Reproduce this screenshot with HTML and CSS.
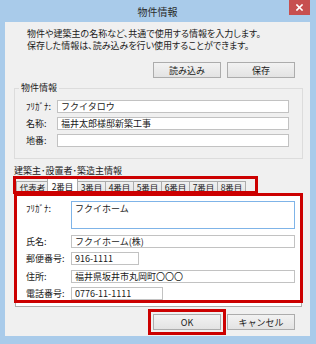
FILE: index.html
```html
<!DOCTYPE html>
<html lang="ja">
<head>
    <meta charset="UTF-8">
    <meta name="viewport" content="width=device-width, initial-scale=1.0">
    <title>物件情報</title>
    <link rel="stylesheet" href="styles.css">
</head>
<body>
    <div class="window">
        <div class="titlebar">
            <span></span>
            <span class="title">物件情報</span>
            <button class="close-btn" aria-label="閉じる">
                <svg width="7" height="7" viewBox="0 0 7 7">
                    <path d="M1 1 L6 6 M6 1 L1 6" stroke="#fff" stroke-width="1.6" stroke-linecap="square"/>
                </svg>
            </button>
        </div>

        <div class="client">
            <p class="intro">物件や建築主の名称など、共通で使用する情報を入力します。<br>保存した情報は、読み込みを行い使用することができます。</p>

            <div class="actions file-actions">
                <button class="btn">読み込み</button>
                <button class="btn">保存</button>
            </div>

            <fieldset class="group">
                <legend>物件情報</legend>
                <div class="form-row">
                    <label>ﾌﾘｶﾞﾅ:</label>
                    <input class="field" type="text" value="フクイタロウ">
                </div>
                <div class="form-row">
                    <label>名称:</label>
                    <input class="field" type="text" value="福井太郎様邸新築工事">
                </div>
                <div class="form-row">
                    <label>地番:</label>
                    <input class="field" type="text" value="">
                </div>
            </fieldset>

            <div class="section-label">建築主･設置者･築造主情報</div>

            <div class="tab-control">
                <div class="tabstrip marked mark-tabs">
                    <div class="tab">代表者</div>
                    <div class="tab active">2番目</div>
                    <div class="tab">3番目</div>
                    <div class="tab">4番目</div>
                    <div class="tab">5番目</div>
                    <div class="tab">6番目</div>
                    <div class="tab">7番目</div>
                    <div class="tab">8番目</div>
                </div>
                <div class="tabpanel marked mark-panel">
                    <div class="form-row tall">
                        <label>ﾌﾘｶﾞﾅ:</label>
                        <textarea class="field focused">フクイホーム</textarea>
                    </div>
                    <div class="form-row">
                        <label>氏名:</label>
                        <input class="field" type="text" value="フクイホーム(株)">
                    </div>
                    <div class="form-row">
                        <label>郵便番号:</label>
                        <input class="field zip" type="text" value="916-1111">
                    </div>
                    <div class="form-row">
                        <label>住所:</label>
                        <input class="field" type="text" value="福井県坂井市丸岡町〇〇〇">
                    </div>
                    <div class="form-row">
                        <label>電話番号:</label>
                        <input class="field tel" type="text" value="0776-11-1111">
                    </div>
                </div>
            </div>

            <div class="actions dialog-actions">
                <span class="marked mark-ok"><button class="btn">OK</button></span>
                <button class="btn">キャンセル</button>
            </div>
        </div>
    </div>
</body>
</html>
```

FILE: styles.css
```css
* {
    margin: 0;
    padding: 0;
    box-sizing: border-box;
}

body {
    font-family: "Noto Sans CJK JP", "Noto Sans", sans-serif;
    font-feature-settings: "palt";
    background: #ffffff;
    color: #1a1a1a;
}

.window {
    width: 316px;
    height: 344px;
    background: #a9cbea;
    padding: 0 6px 8px 5px;
    display: flex;
    flex-direction: column;
}

/* タイトルバー */
.titlebar {
    height: 22px;
    display: grid;
    grid-template-columns: 1fr auto 1fr;
    align-items: start;
}

.titlebar .title {
    font-size: 10px;
    line-height: 24px;
    color: #2b2b2b;
}

.close-btn {
    justify-self: end;
    width: 21px;
    height: 15px;
    border: none;
    background: #c74f4f;
    display: flex;
    align-items: center;
    justify-content: center;
}

.client {
    flex: 1;
    background: #f0f0f0;
    font-size: 9px;
    display: flex;
    flex-direction: column;
}

.intro {
    padding: 6px 0 0 22px;
    line-height: 12px;
}

/* ボタン */
.actions {
    display: flex;
    justify-content: flex-end;
    gap: 6px;
    padding-right: 15px;
}

.file-actions {
    margin-top: 10px;
}

.btn {
    width: 68px;
    height: 16px;
    font-family: inherit;
    font-size: 9px;
    color: #1a1a1a;
    background: linear-gradient(#f2f2f2, #e3e3e3);
    border: 1px solid #acacac;
}

/* グループボックス */
.group {
    margin: 4px 7px 0 9px;
    padding: 6px 13px 11px 11px;
    border: 1px solid #dcdcdc;
    display: flex;
    flex-direction: column;
    gap: 4px;
}

.group legend {
    margin-left: -7px;
    padding: 0 2px;
    line-height: 12px;
}

.form-row {
    display: flex;
    align-items: center;
}

.form-row label {
    width: 31px;
    flex-shrink: 0;
}

.field {
    flex: 1;
    height: 13px;
    font-family: inherit;
    font-size: 9px;
    color: #1a1a1a;
    background: #ffffff;
    border: 1px solid #c2c2c2;
    padding: 0 3px;
    outline: none;
}

.section-label {
    margin: 6px 0 0 9px;
    line-height: 12px;
}

/* タブ */
.tab-control {
    margin: 1px 8px 0 10px;
}

.tabstrip {
    display: flex;
    align-items: flex-end;
    height: 15px;
    padding-left: 1px;
}

.tab {
    width: 29px;
    height: 12px;
    border: 1px solid #acacac;
    border-bottom: none;
    margin-right: -1px;
    background: linear-gradient(#f0f0f0, #e5e5e5);
    font-size: 8.5px;
    line-height: 11px;
    text-align: center;
}

.tab:first-child {
    width: 33px;
}

.tab.active {
    height: 15px;
    background: #ffffff;
    position: relative;
    z-index: 1;
    margin: 0 -1px 0 -1px;
    width: 31px;
    line-height: 14px;
}

.tabpanel {
    background: #ffffff;
    border: 1px solid #acacac;
    padding: 7px 6px 6px 10px;
    display: flex;
    flex-direction: column;
    gap: 4.5px;
}

.tabpanel .form-row label {
    width: 45px;
}

.form-row.tall {
    align-items: flex-start;
    margin-bottom: 1px;
}

.form-row.tall label {
    padding-top: 1px;
}

textarea.field {
    height: 28px;
    resize: none;
    padding-top: 1px;
    line-height: 12px;
}

.field.focused {
    border-color: #7fb4e8;
}

.field.zip {
    flex: none;
    width: 68px;
}

.field.tel {
    flex: none;
    width: 92px;
}

.dialog-actions {
    margin-top: 7px;
}

/* 赤枠の注釈 */
.marked {
    position: relative;
}

.marked::after {
    content: '';
    position: absolute;
    border: 3px solid #cc0000;
    pointer-events: none;
    z-index: 2;
}

.mark-tabs::after {
    top: -2px;
    left: -2px;
    right: -5px;
    bottom: -1px;
}

.mark-tabs {
    width: 238px;
}

.mark-panel::after {
    top: -1px;
    left: -2px;
    right: -2px;
    bottom: 3px;
}

.mark-ok {
    display: flex;
}

.mark-ok::after {
    inset: -5px;
}
```
